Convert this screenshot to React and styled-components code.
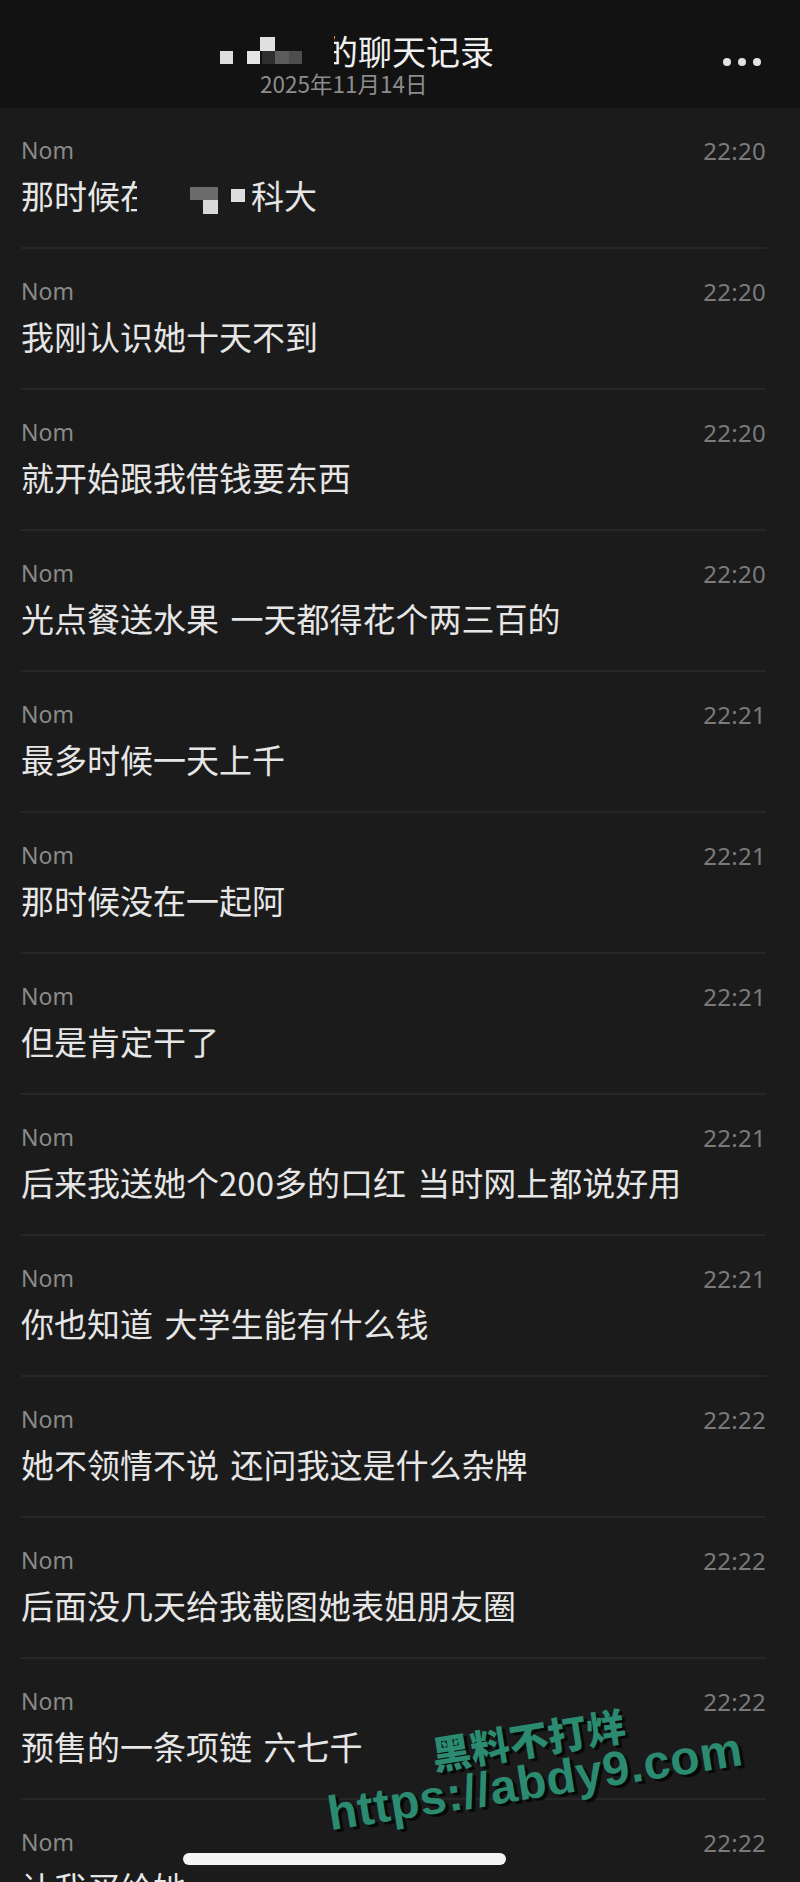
import React from "react";
import styled, { createGlobalStyle } from "styled-components";

const GlobalStyle = createGlobalStyle`
  html, body {
    margin: 0;
    padding: 0;
    background: #1b1b1b;
  }
  * {
    box-sizing: border-box;
  }
`;

const Screen = styled.div`
  position: relative;
  width: 800px;
  height: 1882px;
  overflow: hidden;
  background: #1b1b1b;
  font-family: "Noto Sans CJK SC", "Noto Sans", sans-serif;
`;

const Header = styled.header`
  display: flex;
  justify-content: space-between;
  align-items: flex-start;
  height: 108px;
  padding: 32px 39px 12px 220px;
  background: #121212;
`;

const TitleBlock = styled.div`
  display: flex;
  flex-direction: column;
  align-items: flex-start;
`;

const Title = styled.h1`
  display: flex;
  align-items: center;
  margin: 0;
  height: 38px;
  font-size: 34px;
  line-height: 38px;
  font-weight: 400;
  color: #f0f0f0;
`;

const HalfHidden = styled.span`
  position: relative;
  &::before {
    content: "";
    position: absolute;
    left: 0;
    top: 0;
    bottom: 0;
    width: 30%;
    background: #121212;
  }
`;

const DateLine = styled.div`
  padding-left: 40px;
  font-size: 22.5px;
  line-height: 26px;
  color: #8c8c8c;
`;

const More = styled.div`
  display: flex;
  gap: 7px;
  margin-top: 26px;
`;

const Dot = styled.span`
  width: 8px;
  height: 8px;
  border-radius: 50%;
  background: #e2e2e2;
`;

const List = styled.main`
  display: flex;
  flex-direction: column;
`;

const Row = styled.section`
  margin: 0 34px 0 21px;
  padding: 29px 0 32px;
  border-bottom: 2px solid #262626;
`;

const RowTop = styled.div`
  display: flex;
  justify-content: space-between;
  align-items: center;
  height: 26px;
`;

const Sender = styled.span`
  font-family: "Noto Sans", "Noto Sans CJK SC", sans-serif;
  font-size: 23px;
  color: #8a8a8a;
`;

const Time = styled.span`
  font-family: "Noto Sans", sans-serif;
  font-size: 24px;
  color: #7a7a7a;
  letter-spacing: 0.3px;
`;

const Message = styled.div`
  display: flex;
  align-items: center;
  margin-top: 12px;
  height: 40px;
  font-size: 33px;
  line-height: 40px;
  color: #e6e6e6;
  white-space: pre;
  word-spacing: 4px;
`;

const Clipped = styled.span`
  display: inline-block;
  width: ${({ $w }) => $w}px;
  overflow: hidden;
`;

const Watermark = styled.div`
  position: absolute;
  left: 532px;
  top: 1762px;
  transform: translate(-50%, -50%) rotate(-9deg);
  display: flex;
  flex-direction: column;
  align-items: center;
  color: #2b8b70;
  text-shadow: 3px 3px 0 #080808;
  white-space: nowrap;
  pointer-events: none;
`;

const MarkName = styled.div`
  font-family: "Noto Sans CJK SC", sans-serif;
  font-weight: 900;
  font-size: 39px;
  line-height: 40px;
`;

const MarkUrl = styled.div`
  font-family: "Liberation Sans", Arial, sans-serif;
  font-weight: 700;
  font-size: 48px;
  line-height: 48px;
  letter-spacing: 0.5px;
`;

const HomeBar = styled.div`
  position: absolute;
  left: 183px;
  top: 1853px;
  width: 323px;
  height: 12px;
  border-radius: 6px;
  background: #f4f4f4;
`;

const TitleMosaic = () => (
  <svg width="104" height="38" viewBox="0 0 104 38">
    <rect x="0" y="19" width="13" height="13" fill="#dedede" />
    <rect x="27" y="19" width="13" height="13" fill="#e4e4e4" />
    <rect x="40" y="5" width="15" height="14" fill="#e0e0e0" />
    <rect x="42" y="19" width="13" height="13" fill="#2e2e2e" />
    <rect x="55" y="19" width="14" height="13" fill="#5c5c5c" />
    <rect x="69" y="19" width="13" height="13" fill="#4d4d4d" />
  </svg>
);

const NameMosaic = () => (
  <svg width="114" height="40" viewBox="0 0 114 40">
    <rect x="53" y="12" width="28" height="13" fill="#6b6b6b" />
    <rect x="66" y="25" width="15" height="14" fill="#d8d8d8" />
    <rect x="94" y="14" width="14" height="13" fill="#dddddd" />
  </svg>
);

const messages = [
  { time: "22:20", text: null },
  { time: "22:20", text: "我刚认识她十天不到" },
  { time: "22:20", text: "就开始跟我借钱要东西" },
  { time: "22:20", text: "光点餐送水果 一天都得花个两三百的" },
  { time: "22:21", text: "最多时候一天上千" },
  { time: "22:21", text: "那时候没在一起阿" },
  { time: "22:21", text: "但是肯定干了" },
  { time: "22:21", text: "后来我送她个200多的口红 当时网上都说好用" },
  { time: "22:21", text: "你也知道 大学生能有什么钱" },
  { time: "22:22", text: "她不领情不说 还问我这是什么杂牌" },
  { time: "22:22", text: "后面没几天给我截图她表姐朋友圈" },
  { time: "22:22", text: "预售的一条项链 六七千" },
  { time: "22:22", text: "让我买给她" },
];

export default function App() {
  return (
    <Screen>
      <GlobalStyle />
      <Header>
        <TitleBlock>
          <Title>
            <TitleMosaic />
            <HalfHidden>的</HalfHidden>聊天记录
          </Title>
          <DateLine>2025年11月14日</DateLine>
        </TitleBlock>
        <More>
          <Dot />
          <Dot />
          <Dot />
        </More>
      </Header>
      <List>
        {messages.map((m, i) => (
          <Row key={i}>
            <RowTop>
              <Sender>Nom</Sender>
              <Time>{m.time}</Time>
            </RowTop>
            <Message>
              {m.text === null ? (
                <>
                  那时候
                  <Clipped $w={17}>在</Clipped>
                  <NameMosaic />
                  科大
                </>
              ) : (
                m.text
              )}
            </Message>
          </Row>
        ))}
      </List>
      <Watermark>
        <MarkName>黑料不打烊</MarkName>
        <MarkUrl>https://abdy9.com</MarkUrl>
      </Watermark>
      <HomeBar />
    </Screen>
  );
}
